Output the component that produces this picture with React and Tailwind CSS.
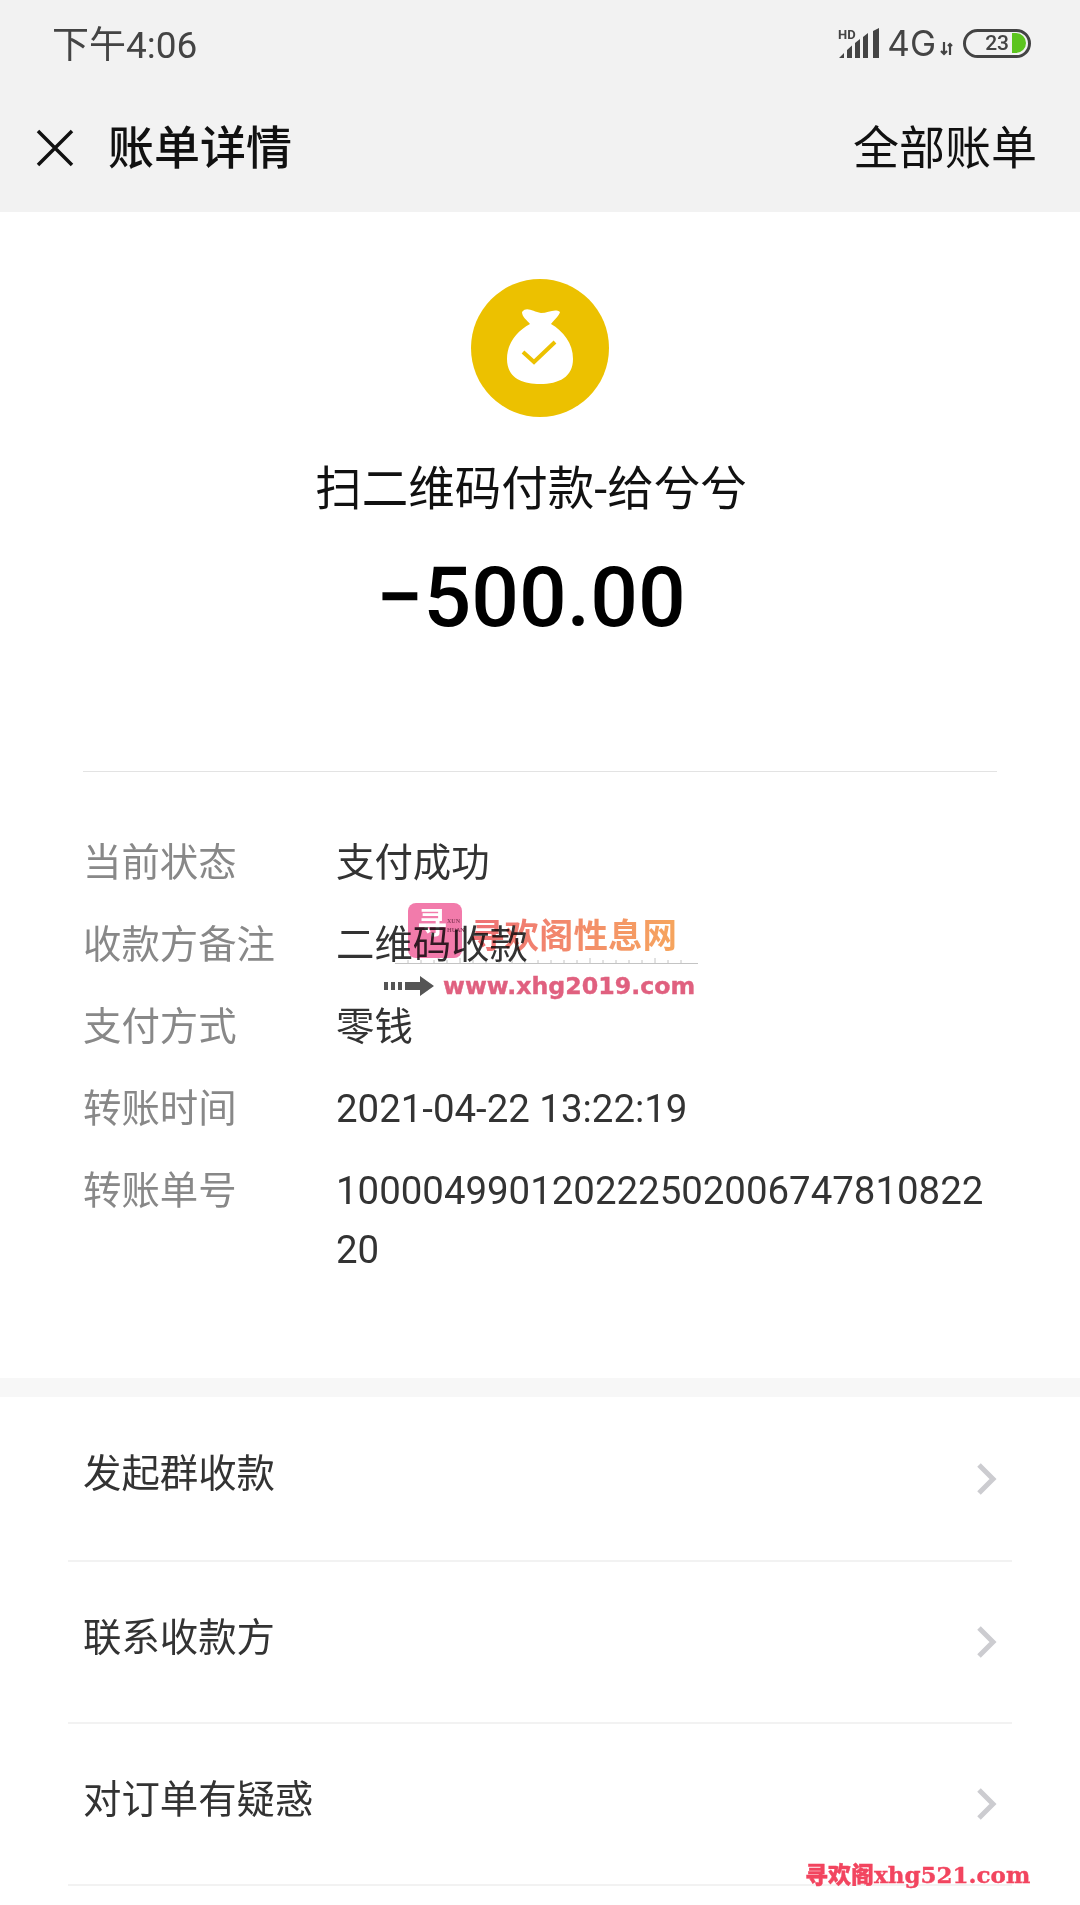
import React from "react";

const details = [
  { label: "当前状态", value: "支付成功" },
  { label: "收款方备注", value: "二维码收款" },
  { label: "支付方式", value: "零钱" },
  { label: "转账时间", value: "2021-04-22 13:22:19" },
  { label: "转账单号", value: "10000499012022250200674781082220" },
];

const actions = ["发起群收款", "联系收款方", "对订单有疑惑"];

const MoneyBag = () => (
  <svg width="138" height="138" viewBox="0 0 138 138">
    <circle cx="69" cy="69" r="69" fill="#ecc100" />
    <path
      d="M51 33C56 27 62 33 70 34C77 34 84 29 89 33C88 37 83 41 80 45C92 52 102 64 102 80C102 98 88 105 69 105C50 105 36 98 36 80C36 64 46 52 59 45C56 41 51 38 51 33Z"
      fill="#fff"
    />
    <path d="M52 73L63 83L84 63" fill="none" stroke="#ecc100" strokeWidth="4" />
  </svg>
);

const StatusIcons = () => (
  <div className="mb-[4px] flex items-center text-[#444]">
    <svg className="overflow-visible" width="42" height="31" viewBox="0 0 42 31" fill="#444">
      <text x="0" y="11" fontSize="13" fontWeight="700" fontFamily="Roboto, sans-serif">
        HD
      </text>
      <path d="M1 30L6 25V30ZM9 22V30H14V17.5ZM17 15V30H22V11ZM25 9V30H30V5ZM35 3V30H41V0Z" />
    </svg>
    <span className="ml-[7px] font-['Inter',sans-serif] text-[35px] leading-none font-normal">4G</span>
    <svg className="ml-[4px] mt-[12px]" width="14" height="14" viewBox="0 0 14 14" fill="none" stroke="#444" strokeWidth="2.2">
      <path d="M4 0V12M1 9L4 12L7 9M10 13V2M8 4L10 2L12 4" />
    </svg>
    <div className="ml-[9px] flex h-[29px] w-[68px] items-center justify-end rounded-full border-[3px] border-[#444] pr-[2px]">
      <span className="text-[21px] leading-none font-medium">23</span>
      <div className="ml-[3px] h-[20px] w-[14px] rounded-r-full bg-[#5cc41e]" />
    </div>
  </div>
);

const Watermark = () => (
  <div className="absolute left-[395px] top-[903px] h-[100px] w-[305px] mix-blend-multiply">
    <div className="absolute left-[13px] top-0 flex h-[55px] w-[54px] rounded-[8px] bg-[#f27bab] pl-[9px] pt-[3px] text-white">
      <span className="text-[30px] leading-[34px] font-bold">寻</span>
      <span className="mt-[11px] font-['Liberation_Serif',serif] text-[6px] leading-[9px] font-bold text-[#8a3a5a]">
        XUN
        <br />
        HUAN
      </span>
    </div>
    <div className="absolute left-[75px] top-[13px] bg-gradient-to-r from-[#ee6f75] to-[#f6a55d] bg-clip-text text-[34.5px] leading-[40px] font-bold text-transparent">
      寻欢阁性息网
    </div>
    <svg className="absolute left-0 top-[50px]" width="305" height="12" viewBox="0 0 305 12" fill="none" stroke="#c4c4c4">
      <path d="M0 10.5H303M13 10V7M26 10V7M39 10V7M52 10V7M65 10V5M78 10V7M91 10V7M104 10V7M117 10V7M130 10V5M143 10V7M156 10V7M169 10V7M182 10V7M195 10V5M208 10V7M221 10V7M234 10V7M247 10V7M260 10V5M273 10V7M286 10V7" />
    </svg>
    <svg className="absolute left-[-11px] top-[70px]" width="54" height="26" viewBox="0 0 54 26" fill="#555">
      <path d="M0 9H4V17H0ZM7 9H11V17H7ZM14 9H18V17H14ZM21 9H36V3L50 13L36 23V17H21Z" />
    </svg>
    <div className="absolute left-[48px] top-[68px] font-['DejaVu_Sans',sans-serif] text-[23.7px] leading-[30px] font-bold text-[#e0607f] [-webkit-text-stroke:0.4px_#e0607f]">
      www.xhg2019.com
    </div>
  </div>
);

export default function App() {
  return (
    <div className="relative min-h-screen overflow-hidden bg-white font-['Roboto','Noto_Sans_CJK_SC',sans-serif]">
      <header className="h-[212px] bg-[#f2f2f2]">
        <div className="flex h-[90px] items-center justify-between pl-[52px] pr-[49px]">
          <span className="text-[37px] leading-none text-[#444]">下午4:06</span>
          <StatusIcons />
        </div>
        <div className="flex h-[116px] items-center justify-between pl-[36px] pr-[43px]">
          <div className="flex items-center">
            <svg width="38" height="38" viewBox="0 0 38 38" fill="none" stroke="#111" strokeWidth="3.5">
              <path d="M2 2L36 36M36 2L2 36" />
            </svg>
            <span className="ml-[34px] text-[46px] leading-none font-medium text-[#111]">账单详情</span>
          </div>
          <span className="text-[46px] leading-none text-[#111]">全部账单</span>
        </div>
      </header>

      <main>
        <section className="flex flex-col items-center pt-[67px]">
          <MoneyBag />
          <div className="mr-[18px] mt-[42px] text-[46.5px] leading-[60px] text-[#111]">扫二维码付款-给兮兮</div>
          <div className="mr-[18px] mt-[31px] text-[84px] leading-[96px] font-medium text-black">
            −500.00
          </div>
        </section>

        <section className="mx-[83px] mt-[125px] border-t border-[#e3e3e3] pb-[99px] pt-[61px]">
          <div className="flex flex-col gap-[23px]">
            {details.map((item) => (
              <div key={item.label} className="flex text-[38.4px] leading-[59px]">
                <span className="w-[253px] shrink-0 text-[#888]">{item.label}</span>
                <span className="min-w-0 flex-1 break-all text-[#333]">{item.value}</span>
              </div>
            ))}
          </div>
        </section>

        <div className="h-[19px] bg-[#f7f7f7]" />

        <section className="mx-[68px]">
          {actions.map((text) => (
            <div key={text} className="flex h-[162px] items-center justify-between border-b-2 border-[#f2f2f2] px-[15px] first:h-[165px]">
              <span className="mb-[10px] text-[38.4px] leading-[59px] text-[#333]">{text}</span>
              <svg width="20" height="32" viewBox="0 0 20 32" fill="none" stroke="#ccccd0" strokeWidth="5">
                <path d="M2 2L16 16L2 30" />
              </svg>
            </div>
          ))}
        </section>
      </main>

      <Watermark />
      <div className="absolute left-[805px] top-[1860px] text-[23px] leading-[30px] font-black whitespace-nowrap text-[#f2455f] [-webkit-text-stroke:0.4px_#f2455f]">
        寻欢阁<span className="font-['DejaVu_Serif',serif]">xhg521.com</span>
      </div>
    </div>
  );
}
